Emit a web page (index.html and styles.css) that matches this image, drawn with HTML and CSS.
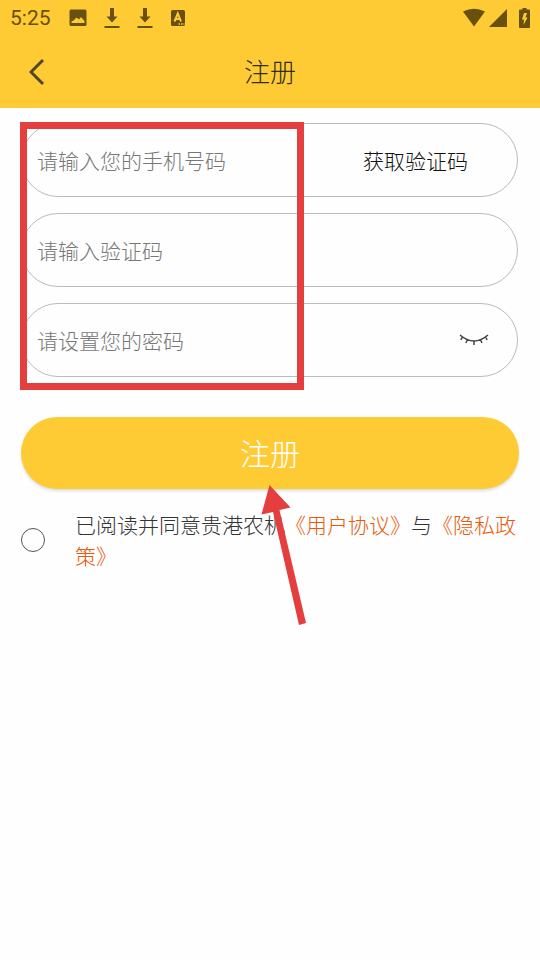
FILE: index.html
```html
<!DOCTYPE html>
<html lang="zh-CN">
<head>
<meta charset="utf-8">
<meta name="viewport" content="width=device-width, initial-scale=1">
<title>注册</title>
<link rel="stylesheet" href="styles.css">
</head>
<body>
<header class="top">
  <div class="status">
    <time class="clock">5:25</time>
    <div class="notices">
      <svg width="18" height="18" viewBox="0 0 18 18"><path fill="currentColor" fill-rule="evenodd" d="M2 0.500H16Q17.500 0.500 17.500 2V15.500Q17.500 17 16 17H2Q0.500 17 0.500 15.500V2Q0.500 0.500 2 0.500ZM2.500 14H15.500V12L12 8L10 10.500L7.500 8.500L4.500 11.500L2.500 12.500Z"/></svg>
      <svg width="16" height="22" viewBox="0 0 16 22"><path fill="currentColor" d="M6 1H10V9.500H13.500L8 15.500L2.500 9.500H6ZM.5 19H15.500V21H.5Z"/></svg>
      <svg width="16" height="22" viewBox="0 0 16 22"><path fill="currentColor" d="M6 1H10V9.500H13.500L8 15.500L2.500 9.500H6ZM.5 19H15.500V21H.5Z"/></svg>
      <svg width="16" height="18" viewBox="0 0 16 18"><rect x="1" y="1" width="14" height="16" rx="1.500" fill="currentColor"/><path class="cut" d="M4.500 12.500L7.800 4.500L11 12.500M5.800 10H10"/><path class="dots" d="M8.500 15H14.500"/></svg>
    </div>
    <div class="system">
      <svg width="24" height="20" viewBox="0 0 24 20"><path fill="currentColor" d="M1 3.500Q12-2 23 3.500L12 18.500Z"/></svg>
      <svg width="18" height="20" viewBox="0 0 18 20"><path fill="currentColor" d="M0 19H18V1Z"/></svg>
      <svg class="battery" width="11" height="20" viewBox="0 0 11 20"><path fill="currentColor" fill-rule="evenodd" d="M3.500 0H7.500V1.500H10Q11 1.500 11 2.500V19Q11 20 10 20H1Q0 20 0 19V2.500Q0 1.500 1 1.500H3.500ZM5 5L3 11.500H5L4.500 17L8.500 9.500H6.500L8 5Z"/></svg>
    </div>
  </div>
  <div class="bar">
    <button class="back" type="button" aria-label="返回"><svg width="16" height="28" viewBox="0 0 16 28"><path d="M14 2L2 14L14 26"/></svg></button>
    <h1 class="title">注册</h1>
  </div>
</header>
<main>
  <form class="form">
    <div class="fields">
      <div class="field">
        <input class="entry" type="tel" aria-label="手机号码" placeholder="请输入您的手机号码">
        <button class="code" type="button">获取验证码</button>
      </div>
      <div class="field">
        <input class="entry" type="text" aria-label="验证码" placeholder="请输入验证码">
      </div>
      <div class="field">
        <input class="entry" type="password" aria-label="密码" placeholder="请设置您的密码">
        <button class="reveal" type="button" aria-label="显示密码"><svg width="30" height="14" viewBox="0 0 30 14"><path d="M1 2Q15 14 29 2M3.500 4L1.800 7M8.500 7L6.800 10M15 8.500V12M21.500 7L23 10M26.500 4L28.200 7"/></svg></button>
      </div>
      <div class="highlight" aria-hidden="true"></div>
    </div>
    <div class="action">
      <button class="submit" type="submit">注册</button>
      <svg class="pointer" aria-hidden="true" width="46" height="142" viewBox="0 0 46 142"><path d="M8.500 0L29.500 22.500L18.500 25L45 138L38 140L12 27L.5 29.500Z"/></svg>
    </div>
    <div class="agree">
      <input class="tick" id="agree" type="radio">
      <p class="terms"><label for="agree">已阅读并同意贵港农机</label><a href="#terms">《用户协议》</a>与<a href="#privacy">《隐私政策》</a></p>
    </div>
  </form>
</main>
</body>
</html>
```
FILE: styles.css
```css
* { box-sizing: border-box; }

body {
  margin: 0;
  min-height: 100vh;
  background: #fefefe;
  color: #333;
  font-family: "Noto Sans CJK SC", sans-serif;
  font-size: 21px;
  font-weight: 300;
}

button,
input {
  margin: 0;
  padding: 0;
  border: 0;
  background: none;
  color: inherit;
  font: inherit;
}

svg { display: block; }

.top { background: #ffcb34; }

.status {
  display: flex;
  align-items: center;
  height: 36px;
  padding: 0 10px;
  color: #68500f;
}

.clock {
  font-family: Roboto, sans-serif;
  font-size: 21px;
  font-weight: 400;
}

.notices {
  display: flex;
  align-items: center;
  gap: 17px;
  margin-left: 18px;
}

.cut {
  fill: none;
  stroke: #ffcb34;
  stroke-width: 2;
}

.dots {
  fill: none;
  stroke: #ffcb34;
  stroke-width: 1.5;
  stroke-dasharray: 1.5 1;
}

.system {
  display: flex;
  align-items: center;
  gap: 3px;
  margin-left: auto;
}

.battery { margin-left: 9px; }

.bar {
  display: grid;
  grid-template-columns: 56px 1fr 56px;
  align-items: center;
  height: 72px;
}

.back {
  display: flex;
  justify-content: flex-end;
  padding: 0 11px;
}

.back path {
  fill: none;
  stroke: #514629;
  stroke-width: 3;
}

.title {
  margin: 0;
  padding-bottom: 2px;
  color: #302b20;
  font-size: 26px;
  font-weight: 300;
  line-height: 36px;
  text-align: center;
}

.form { padding: 15px 21px 0; }

.fields {
  position: relative;
  display: grid;
  gap: 16px;
  margin-right: 1px;
}

.field {
  display: flex;
  align-items: center;
  height: 74px;
  padding: 0 28px 0 15px;
  border: 1px solid #bbb;
  border-radius: 37px;
}

.entry {
  flex: 1;
  min-width: 0;
  height: 48px;
  outline: 0;
}

.entry::placeholder {
  color: #777;
  opacity: 1;
}

.code {
  padding: 0 21px;
  color: #111;
}

.reveal path {
  fill: none;
  stroke: #444;
  stroke-width: 1.5;
}

.highlight {
  position: absolute;
  inset: -1px 43% -13px -1px;
  border: 7px solid #e53e3f;
  pointer-events: none;
}

.action {
  position: relative;
  margin-top: 40px;
}

.submit {
  display: block;
  width: 100%;
  height: 72px;
  padding-bottom: 2px;
  border-radius: 36px;
  background: #ffcb34;
  box-shadow: 0 2px 3px #ddd;
  color: #fff;
  font-size: 30px;
}

.pointer {
  position: absolute;
  top: 68px;
  left: calc(50% - 9px);
  z-index: 1;
  fill: #e53e3f;
  pointer-events: none;
}

.agree {
  display: flex;
  align-items: center;
  gap: 30px;
  margin-top: 20px;
}

.tick {
  flex: none;
  width: 24px;
  height: 24px;
  border: 1px solid #555;
  border-radius: 50%;
  appearance: none;
}

.tick:checked { background: #ffcb34; }

.terms {
  margin: 0;
  line-height: 31px;
}

.terms a {
  color: #e85a08;
  text-decoration: none;
}
```
